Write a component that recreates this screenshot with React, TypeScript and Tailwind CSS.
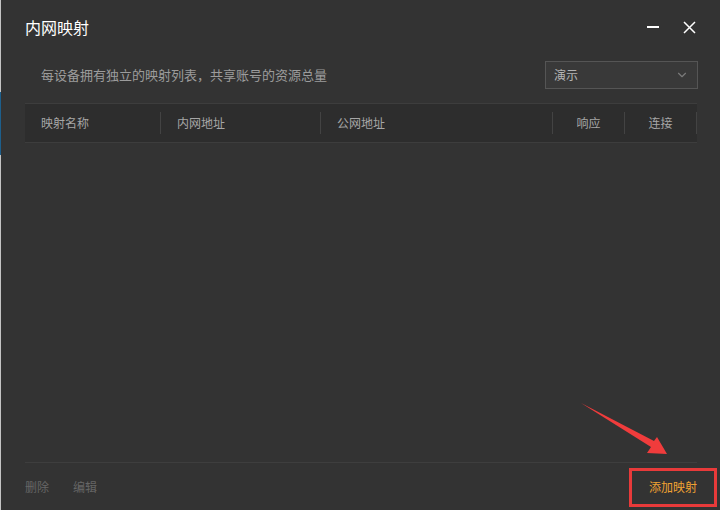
import { ChevronDown } from "lucide-react";

const font = {
  fontFamily: '"Microsoft YaHei", "Noto Sans CJK SC", "Noto Sans", sans-serif',
};

const cols = [
  { label: "映射名称", w: "w-[135px]", align: "pl-4" },
  { label: "内网地址", w: "w-[160px]", align: "pl-4" },
  { label: "公网地址", w: "w-[232px]", align: "pl-4" },
  { label: "响应", w: "w-[72px]", align: "justify-center" },
  { label: "连接", w: "w-[72px]", align: "justify-center" },
];

function Arrow() {
  return (
    <svg
      className="pointer-events-none absolute left-0 top-0"
      width={720}
      height={510}
      viewBox="0 0 720 510"
    >
      <polygon
        points="581,403 654,441 657,437 667,454 647,453 651,447"
        fill="#f03c3c"
      />
    </svg>
  );
}

export default function App() {
  return (
    <div
      className="relative flex h-[510px] w-[720px] overflow-hidden bg-[#333333]"
      style={font}
    >
      {/* window edge behind the dialog */}
      <div className="flex w-px flex-col bg-[#c4c4c4]">
        <div className="h-[92px]" />
        <div className="h-[63px] bg-[#1d5f8c]" />
      </div>

      <div className="flex flex-1 flex-col">
        {/* title bar */}
        <div className="flex h-[54px] items-center pl-6 pr-[24px]">
          <span className="text-[16px] text-white">内网映射</span>
          <div className="ml-auto flex items-center gap-[24px]">
            <span className="block h-[1.5px] w-[12px] bg-white" />
            <svg width="13" height="13" viewBox="0 0 13 13">
              <path
                d="M1 1 L12 12 M12 1 L1 12"
                stroke="#ffffff"
                strokeWidth="1.5"
              />
            </svg>
          </div>
        </div>

        {/* description + select */}
        <div className="mb-[14px] mt-[7px] flex h-[28px] items-center pl-10 pr-[22px]">
          <span className="text-[13px] text-[#9c9c9c]">
            每设备拥有独立的映射列表，共享账号的资源总量
          </span>
          <div className="ml-auto flex h-[28px] w-[153px] items-center border border-[#555555] bg-[#393939] pl-2 pr-2">
            <span className="text-[12px] text-[#b4b4b4]">演示</span>
            <ChevronDown
              className="ml-auto text-[#7a7a7a]"
              size={14}
              strokeWidth={2}
            />
          </div>
        </div>

        {/* table header */}
        <div className="ml-6 mr-[23px] flex h-[40px] items-center border-y border-[#3d3d3d] bg-[#2d2d2d]">
          {cols.map((c, i) => (
            <div key={c.label} className={`flex h-full items-center ${c.w}`}>
              {i > 0 && <span className="h-[22px] w-px bg-[#434343]" />}
              <div className={`flex flex-1 items-center ${c.align}`}>
                <span className="text-[12px] text-[#a6a6a6]">{c.label}</span>
              </div>
            </div>
          ))}
          <span className="h-[22px] w-px bg-[#434343]" />
        </div>

        <div className="flex-1" />

        {/* footer */}
        <div className="ml-6 mr-[23px] flex h-[48px] items-center border-t border-[#3e3e3e]">
          <span className="text-[12px] text-[#666666]">删除</span>
          <span className="ml-6 text-[12px] text-[#666666]">编辑</span>
          <span className="ml-auto text-[12px] text-[#f0a232]">添加映射</span>
        </div>
      </div>

      {/* annotation */}
      <div className="pointer-events-none absolute left-[629px] top-[468px] h-[39px] w-[88px] border-[3px] border-[#e83a3a]" />
      <Arrow />
    </div>
  );
}
